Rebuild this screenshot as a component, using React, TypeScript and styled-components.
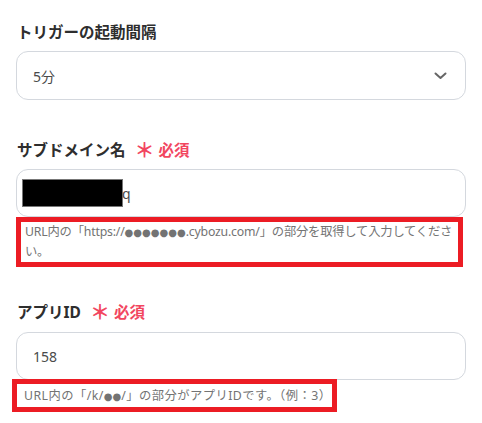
import styled, { createGlobalStyle } from 'styled-components';

const GlobalStyle = createGlobalStyle`
  body {
    margin: 0;
    background: #ffffff;
    font-family: "Noto Sans", "Noto Sans CJK JP", sans-serif;
  }
`;

const Page = styled.div`
  display: flex;
  flex-direction: column;
  width: 450px;
  padding: 21px 16px 0;
`;

const Field = styled.div<{ $gap: number }>`
  display: flex;
  flex-direction: column;
  margin-bottom: ${(p) => p.$gap}px;
`;

const Label = styled.div<{ $space?: number }>`
  display: flex;
  align-items: center;
  gap: 9px;
  height: 20px;
  margin-bottom: ${(p) => p.$space ?? 10}px;
  padding-left: 1px;
  font-size: 15.5px;
  font-weight: 700;
  color: #2e2e2e;
`;

const Required = styled.span`
  display: flex;
  align-items: center;
  gap: 4px;
  color: #f2465f;
  font-size: 15.5px;
  font-weight: 700;
`;

const Star = styled.span`
  font-size: 20px;
  line-height: 1;
  margin-top: 3px;
`;

const Box = styled.div<{ $height: number }>`
  display: flex;
  align-items: center;
  justify-content: space-between;
  box-sizing: border-box;
  height: ${(p) => p.$height}px;
  padding: 0 18px 0 16px;
  border: 1px solid #d4d8de;
  border-radius: 12px;
  font-size: 14px;
  color: #4a4a4a;
`;

const Value = styled.span`
  display: flex;
  align-items: center;
`;

const Redacted = styled.span`
  display: inline-block;
  width: 99px;
  height: 26px;
  margin-left: -10px;
  background: #000000;
  outline: 1px solid #777777;
`;

const Highlight = styled.div<{
  $left: number;
  $right: number;
  $pad: string;
  $top: number;
  $spacing?: number;
}>`
  align-self: ${(p) => (p.$right > 0 ? 'flex-start' : 'stretch')};
  margin: ${(p) => p.$top}px ${(p) => Math.max(p.$right, 0)}px 0 ${(p) => p.$left}px;
  ${(p) => (p.$right < 0 ? `margin-right: ${-p.$right}px;` : '')}
  padding: ${(p) => p.$pad};
  border: 5px solid #ec1c24;
  font-size: 12.3px;
  line-height: 19px;
  letter-spacing: ${(p) => p.$spacing ?? 0}px;
  white-space: nowrap;
  color: #737373;
`;

const Dots = styled.span`
  font-family: "DejaVu Sans", sans-serif;
  font-size: 10px;
  letter-spacing: 0;
`;

const Chevron = () => (
  <svg width="13" height="8" viewBox="0 0 13 8">
    <path d="M1.5 1.5 L6.5 6 L11.5 1.5" fill="none" stroke="#666666" strokeWidth="2" strokeLinecap="round" strokeLinejoin="round" />
  </svg>
);

const App = () => {
  return (
    <>
      <GlobalStyle />
      <Page>
        <Field $gap={39}>
          <Label>トリガーの起動間隔</Label>
          <Box $height={49}>
            <Value>5分</Value>
            <Chevron />
          </Box>
        </Field>

        <Field $gap={34}>
          <Label>
            サブドメイン名
            <Required>
              <Star>＊</Star>必須
            </Required>
          </Label>
          <Box $height={48}>
            <Value>
              <Redacted />q
            </Value>
          </Box>
          <Highlight $left={0} $right={-3} $pad="0 0 1px 4px" $top={0} $spacing={-0.2}>
            URL内の「https://<Dots>●●●●●●●</Dots>.cybozu.com/」の部分を取得して入力してくださ
            <br />
            い。
          </Highlight>
        </Field>

        <Field $gap={0}>
          <Label $space={11}>
            アプリID
            <Required>
              <Star>＊</Star>必須
            </Required>
          </Label>
          <Box $height={48}>
            <Value>158</Value>
          </Box>
          <Highlight $left={-4} $right={1} $pad="2px 0 1px 7px" $top={-1} $spacing={0.45}>
            URL内の「/k/<Dots>●●</Dots>/」の部分がアプリIDです。（例：3）
          </Highlight>
        </Field>
      </Page>
    </>
  );
};

export default App;
